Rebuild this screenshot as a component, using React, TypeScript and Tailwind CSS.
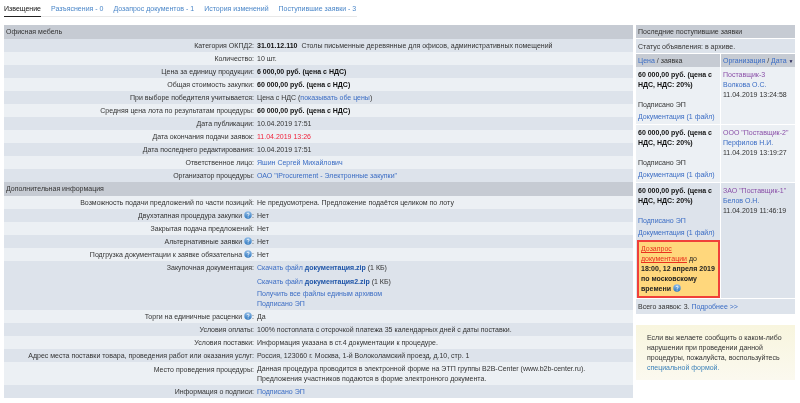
import React from "react";

const A = ({ children, className = "" }: { children: React.ReactNode; className?: string }) => (
  <span className={"text-[#3a6cc4] " + className}>{children}</span>
);

const Q = () => (
  <svg width="8" height="8" viewBox="0 0 16 16" className="inline-block align-[-1px]">
    <defs>
      <linearGradient id="qg" x1="0" y1="0" x2="0" y2="1">
        <stop offset="0" stopColor="#8fbbe6" />
        <stop offset="1" stopColor="#2f78c0" />
      </linearGradient>
    </defs>
    <circle cx="8" cy="8" r="7.5" fill="url(#qg)" />
    <path d="M5.8 6.2C6 4.8 7 4.2 8.2 4.2c1.3 0 2.2.8 2.2 1.9 0 1.7-2.2 1.7-2.2 3.4" fill="none" stroke="#fff" strokeWidth="1.8" />
    <circle cx="8.2" cy="12" r="1.1" fill="#fff" />
  </svg>
);

type Row = { l: React.ReactNode; v: React.ReactNode; c?: string };

const rows1: Row[] = [
  { l: "Категория ОКПД2:", v: <><b className="text-[#111]">31.01.12.110</b>&nbsp; Столы письменные деревянные для офисов, административных помещений</> },
  { l: "Количество:", v: "10 шт." },
  { l: "Цена за единицу продукции:", v: <b className="text-[#111]">6 000,00 руб. (цена с НДС)</b> },
  { l: "Общая стоимость закупки:", v: <b className="text-[#111]">60 000,00 руб. (цена с НДС)</b> },
  { l: "При выборе победителя учитывается:", v: <>Цена с НДС (<A>показывать обе цены</A>)</> },
  { l: "Средняя цена лота по результатам процедуры:", v: <b className="text-[#111]">60 000,00 руб. (цена с НДС)</b> },
  { l: "Дата публикации:", v: "10.04.2019 17:51" },
  { l: "Дата окончания подачи заявок:", v: <span className="text-[#f0243c]">11.04.2019 13:26</span> },
  { l: "Дата последнего редактирования:", v: "10.04.2019 17:51" },
  { l: "Ответственное лицо:", v: <A>Яшин Сергей Михайлович</A> },
  { l: "Организатор процедуры:", v: <A>ОАО "iProcurement - Электронные закупки"</A> },
];

const rows2: Row[] = [
  { l: "Возможность подачи предложений по части позиций:", v: "Не предусмотрена. Предложение подаётся целиком по лоту" },
  { l: <>Двухэтапная процедура закупки <Q />:</>, v: "Нет" },
  { l: "Закрытая подача предложений:", v: "Нет" },
  { l: <>Альтернативные заявки <Q />:</>, v: "Нет" },
  { l: <>Подгрузка документации к заявке обязательна <Q />:</>, v: "Нет" },
  {
    l: "Закупочная документация:",
    c: "h-[49px]",
    v: (
      <div className="flex flex-col mt-px">
        <div className="h-[10px] leading-[10px]"><A>Скачать файл <b className="text-[#1f55a8]">документация.zip</b></A> (1 КБ)</div>
        <div className="h-[10px] leading-[10px] mt-[4px]"><A>Скачать файл <b className="text-[#1f55a8]">документация2.zip</b></A> (1 КБ)</div>
        <div className="h-[10px] leading-[10px] mt-[2px]"><A>Получить все файлы единым архивом</A></div>
        <div className="h-[10px] leading-[10px]"><A>Подписано ЭП</A></div>
      </div>
    ),
  },
  { l: <>Торги на единичные расценки <Q />:</>, v: "Да" },
  { l: "Условия оплаты:", v: "100% постоплата с отсрочкой платежа 35 календарных дней с даты поставки." },
  { l: "Условия поставки:", v: "Информация указана в ст.4 документации к процедуре." },
  { l: "Адрес места поставки товара, проведения работ или оказания услуг:", v: "Россия, 123060 г. Москва, 1-й Волоколамский проезд, д.10, стр. 1" },
  {
    l: <div className="mt-px">Место проведения процедуры:</div>,
    c: "h-[23px]",
    v: (
      <div className="flex flex-col mt-px">
        <div className="h-[10px] leading-[10px]">Данная процедура проводится в электронной форме на ЭТП группы B2B-Center (www.b2b-center.ru).</div>
        <div className="h-[10px] leading-[10px]">Предложения участников подаются в форме электронного документа.</div>
      </div>
    ),
  },
  { l: "Информация о подписи:", v: <A>Подписано ЭП</A> },
];

const TableRows = ({ rows, start }: { rows: Row[]; start: number }) => (
  <>
    {rows.map((r, i) => (
      <div
        key={i}
        className={
          "flex pt-px leading-[11px] " +
          (r.c ?? "h-[13px]") +
          " " +
          ((i + start) % 2 === 0 ? "bg-[#dde3eb]" : "bg-[#ecf0f4]")
        }
      >
        <div className="w-[250px] shrink-0 text-right whitespace-nowrap">{r.l}</div>
        <div className="ml-[3px] flex-1 whitespace-nowrap">{r.v}</div>
      </div>
    ))}
  </>
);

const Bid = ({
  org,
  person,
  date,
  signedLink,
  bg,
  extra,
}: {
  org: string;
  person: string;
  date: string;
  signedLink?: boolean;
  bg: string;
  extra?: React.ReactNode;
}) => (
  <div className="flex mb-px gap-px">
    <div className={"w-[84px] shrink-0 " + bg}>
      <div className="pl-[2px] pt-[3px] leading-[10px] font-bold text-[#111]">
        60 000,00 руб. (цена с НДС, НДС: 20%)
      </div>
      <div className="pl-[2px] mt-[10px] leading-[10px]">{signedLink ? <A>Подписано ЭП</A> : "Подписано ЭП"}</div>
      <div className="pl-[2px] mt-[2px] pb-[2px] leading-[10px] whitespace-nowrap"><A>Документация (1 файл)</A></div>
      {extra}
    </div>
    <div className={"flex-1 pl-[2px] pt-[3px] leading-[10px] whitespace-nowrap " + bg}>
      <div className="text-[#8a4fa8]">{org}</div>
      <div className="text-[#3a6cc4]">{person}</div>
      <div>{date}</div>
    </div>
  </div>
);

const Tab = ({ children }: { children: React.ReactNode }) => (
  <div className="ml-[10px] text-[#4a86c8]">{children}</div>
);

export default function App() {
  return (
    <div className="w-[800px] h-[403px] overflow-hidden bg-white text-[#333] text-[7px] font-['Liberation_Sans',Arial,sans-serif] blur-[0.2px]">
      <div className="h-[25px] pl-[4px]">
        <div className="w-[353px] h-[17px] flex border-b border-[#e8e8e8] leading-[18px]">
          <div className="h-[17px] border-b border-[#222] text-[#111]">Извещение</div>
          <Tab>Разъяснения - 0</Tab>
          <Tab>Дозапрос документов - 1</Tab>
          <Tab>История изменений</Tab>
          <Tab>Поступившие заявки - 3</Tab>
        </div>
      </div>
      <div className="flex pl-[4px]">
        <div className="w-[629px] shrink-0">
          <div className="h-[14px] bg-[#c6cbd3] pl-[2px] leading-[14px]">Офисная мебель</div>
          <TableRows rows={rows1} start={0} />
          <div className="h-[14px] bg-[#c6cbd3] pl-[2px] leading-[13px]">Дополнительная информация</div>
          <TableRows rows={rows2} start={1} />
        </div>
        <div className="w-[159px] ml-[3px] shrink-0">
          <div className="h-[13px] mb-px bg-[#c6cbd3] pl-[2px] leading-[13px]">Последние поступившие заявки</div>
          <div className="h-[14px] mb-px bg-[#dde3eb] pl-[2px] leading-[15px]">Статус объявления: в архиве.</div>
          <div className="flex gap-px h-[13px] leading-[13px]">
            <div className="w-[84px] pl-[2px] bg-[#c6cbd3]"><A>Цена</A> / заявка</div>
            <div className="flex-1 pl-[2px] bg-[#c6cbd3] whitespace-nowrap"><A>Организация</A> / <A>Дата</A> <span className="text-[#225] text-[5px]">▼</span></div>
          </div>
          <Bid bg="bg-[#ecf0f4]" org="Поставщик-3" person="Волкова О.С." date="11.04.2019 13:24:58" />
          <Bid bg="bg-[#ecf0f4]" org={'ООО "Поставщик-2"'} person="Перфилов Н.И." date="11.04.2019 13:19:27" />
          <Bid
            bg="bg-[#dde3eb]"
            org={'ЗАО "Поставщик-1"'}
            person="Белов О.Н."
            date="11.04.2019 11:46:19"
            signedLink
            extra={
              <div className="w-[83px] ml-px border-[2px] border-[#f0403a] bg-[#ffd77c] pl-[2px] pt-[2px] pb-[2px] leading-[10px] text-[#222] whitespace-nowrap">
                <span className="text-[#e8301e] underline">Дозапрос</span>
                <br />
                <span className="text-[#e8301e] underline">документации</span> до
                <br />
                <b>18:00, 12 апреля 2019</b>
                <br />
                <b>по московскому</b>
                <br />
                <b>времени</b> <Q />
              </div>
            }
          />
          <div className="h-[15px] bg-[#dde3eb] pl-[2px] leading-[15px]">Всего заявок: 3. <A>Подробнее &gt;&gt;</A></div>
          <div className="mt-[11px] h-[55px] bg-gradient-to-b from-[#f8f5de] to-[#fbf9ef] pl-[11px] pt-[8px] leading-[10px] whitespace-nowrap">
            Если вы желаете сообщить о каком-либо
            <br />
            нарушении при проведении данной
            <br />
            процедуры, пожалуйста, воспользуйтесь
            <br />
            <span className="text-[#3a80b8]">специальной формой.</span>
          </div>
        </div>
      </div>
    </div>
  );
}
